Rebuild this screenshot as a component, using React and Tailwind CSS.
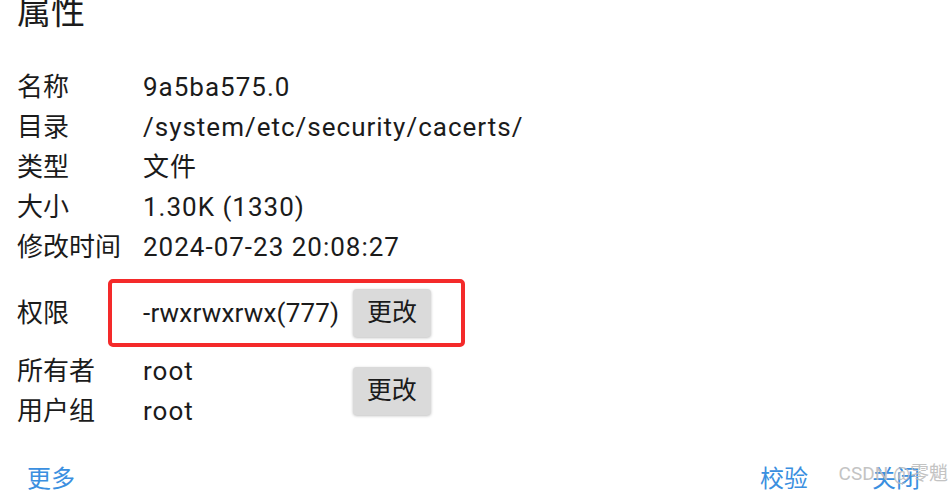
const Row = ({ label, value }) => (
    <div className="flex h-[40px] items-center">
        <div className="w-[126px] shrink-0">{label}</div>
        <div className="tracking-[1px]">{value}</div>
    </div>
);

const ChangeButton = () => (
    <button className="h-[48px] w-[78px] rounded-[4px] bg-[#dadada] text-[25px] text-[#1b1b1b] shadow-[0_1px_3px_rgba(0,0,0,0.25)]">
        更改
    </button>
);

export default function App() {
    const font = { fontFamily: "Roboto, 'Noto Sans CJK SC', sans-serif" };

    return (
        <div className="relative h-[492px] w-[952px] overflow-hidden bg-white text-[26px] text-[#1b1b1b]" style={font}>
            <div className="mt-[-8px] pl-[17px] text-[34px] leading-[40px]">属性</div>

            <div className="mt-[35px] pl-[17px]">
                <Row label="名称" value="9a5ba575.0" />
                <Row label="目录" value="/system/etc/security/cacerts/" />
                <Row label="类型" value="文件" />
                <Row label="大小" value="1.30K (1330)" />
                <Row label="修改时间" value="2024-07-23 20:08:27" />

                <div className="mt-[12px] flex h-[68px] items-center">
                    <div className="w-[91px] shrink-0">权限</div>
                    <div className="flex h-[68px] w-[357px] items-center justify-between rounded-[5px] border-[4px] border-[#f42a2a] pl-[31px] pr-[30px]">
                        <span className="tracking-[0.2px]">-rwxrwxrwx(777)</span>
                        <ChangeButton />
                    </div>
                </div>

                <div className="mt-[4px] flex items-center">
                    <div>
                        <Row label="所有者" value="root" />
                        <Row label="用户组" value="root" />
                    </div>
                    <div className="ml-[159px]">
                        <ChangeButton />
                    </div>
                </div>
            </div>

            <div className="mt-[33px] flex items-center pl-[27px] pr-[32px] text-[24px] leading-[30px] text-[#3a8fe0]">
                <span>更多</span>
                <span className="ml-auto">校验</span>
                <span className="ml-[64px]">关闭</span>
            </div>

            <div className="absolute bottom-[4px] right-[4px] text-[19px] text-[#bdbdbd] opacity-90">CSDN @零魈</div>
        </div>
    );
}
